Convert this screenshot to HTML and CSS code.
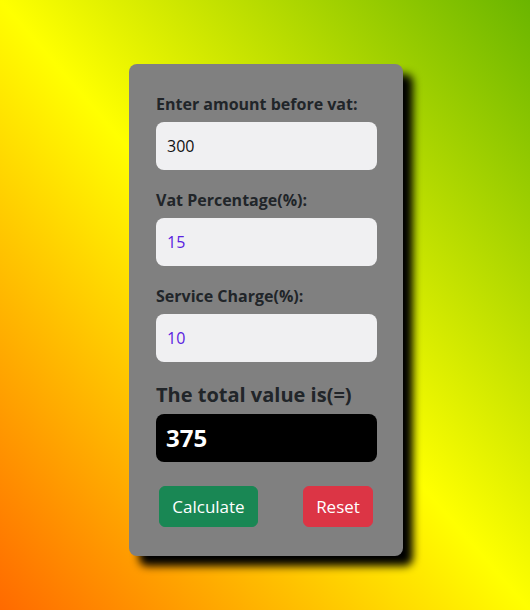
FILE: index.html
```html
<!DOCTYPE html>
<html lang="en">
<head>
<meta charset="utf-8">
<title>VAT Calculator</title>
<link rel="stylesheet" href="styles.css">
</head>
<body>
<main class="card">
  <div class="field">
    <label class="label" for="amount">Enter amount before vat:</label>
    <input class="input input-dark" id="amount" type="text" value="300">
  </div>
  <div class="field">
    <label class="label" for="vat">Vat Percentage(%):</label>
    <input class="input input-indigo" id="vat" type="text" value="15">
  </div>
  <div class="field">
    <label class="label" for="service">Service Charge(%):</label>
    <input class="input input-indigo" id="service" type="text" value="10">
  </div>
  <h2 class="total-label">The total value is(=)</h2>
  <div class="result">375</div>
  <div class="actions">
    <button class="btn btn-success" type="button">Calculate</button>
    <button class="btn btn-danger" type="button">Reset</button>
  </div>
</main>
</body>
</html>
```
FILE: styles.css
```css
* { box-sizing: border-box; }
html, body { margin: 0; height: 100%; }
body {
  font-family: "Open Sans", "Noto Sans", "Liberation Sans", sans-serif;
  color: #212529;
  background: linear-gradient(to top right, #ff6a00 0%, #ffff00 50%, #6ab500 100%);
  padding: 64px 0 0 2px;
}
.card {
  width: 274px;
  margin: 0 auto;
  background: #808080;
  border-radius: 8px;
  padding: 28px 26px 29px 27px;
  box-shadow: 10px 10px 8px #000;
}
.field { display: flex; flex-direction: column; margin-bottom: 18px; }
.label {
  font-size: 16px;
  font-weight: 700;
  line-height: 24px;
  margin-bottom: 6px;
}
.input {
  height: 48px;
  border: none;
  border-radius: 8px;
  background: #f0f0f2;
  font-family: inherit;
  font-size: 16px;
  padding: 0 11px;
  outline: none;
}
.input-dark { color: #111; }
.input-indigo { color: #5a22e0; }
.total-label {
  margin: 0 0 4px;
  font-size: 20px;
  line-height: 30px;
  font-weight: 700;
}
.result {
  height: 48px;
  background: #000;
  color: #fff;
  border-radius: 8px;
  font-size: 24px;
  font-weight: 700;
  line-height: 48px;
  padding-left: 10px;
  margin-bottom: 24px;
}
.actions {
  display: flex;
  justify-content: space-between;
  padding: 0 4px 0 3px;
}
.btn {
  font-family: inherit;
  font-size: 17px;
  line-height: 27px;
  padding: 6px 12px;
  border: 1px solid transparent;
  border-radius: 6px;
  color: #fff;
  cursor: pointer;
}
.btn-success { background: #198754; border-color: #198754; width: 99px; }
.btn-danger { background: #dc3545; border-color: #dc3545; width: 70px; }
```
